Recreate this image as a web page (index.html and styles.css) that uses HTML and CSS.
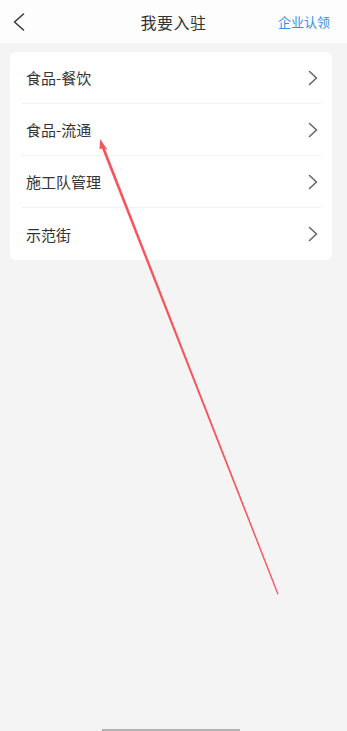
FILE: index.html
```html
<!DOCTYPE html>
<html lang="zh-CN">
<head>
    <meta charset="UTF-8">
    <meta name="viewport" content="width=device-width, initial-scale=1.0">
    <title>我要入驻</title>
    <link rel="stylesheet" href="styles.css">
</head>
<body>
    <header class="topbar">
        <a class="back" href="#">
            <svg width="12" height="18" viewBox="0 0 12 18"><path d="M10.5 1 L1.5 9 L10.5 17" fill="none" stroke="#333" stroke-width="1.5" stroke-linecap="round" stroke-linejoin="round"/></svg>
        </a>
        <h1>我要入驻</h1>
        <a class="claim" href="#">企业认领</a>
    </header>

    <div class="card">
        <a class="row" href="#"><span>食品-餐饮</span><svg class="arrow" width="10" height="16" viewBox="0 0 10 16"><path d="M1.5 1.5 L8.5 8 L1.5 14.5" fill="none" stroke="#666" stroke-width="1.6" stroke-linecap="round" stroke-linejoin="round"/></svg></a>
        <a class="row" href="#"><span>食品-流通</span><svg class="arrow" width="10" height="16" viewBox="0 0 10 16"><path d="M1.5 1.5 L8.5 8 L1.5 14.5" fill="none" stroke="#666" stroke-width="1.6" stroke-linecap="round" stroke-linejoin="round"/></svg></a>
        <a class="row" href="#"><span>施工队管理</span><svg class="arrow" width="10" height="16" viewBox="0 0 10 16"><path d="M1.5 1.5 L8.5 8 L1.5 14.5" fill="none" stroke="#666" stroke-width="1.6" stroke-linecap="round" stroke-linejoin="round"/></svg></a>
        <a class="row" href="#"><span>示范街</span><svg class="arrow" width="10" height="16" viewBox="0 0 10 16"><path d="M1.5 1.5 L8.5 8 L1.5 14.5" fill="none" stroke="#666" stroke-width="1.6" stroke-linecap="round" stroke-linejoin="round"/></svg></a>
    </div>

    <svg class="pointer" width="347" height="731" viewBox="0 0 347 731">
        <polygon points="101,146 103.6,145 278.6,594 277.4,594.4" fill="#f5555a"/>
        <polygon points="100,139 108,150.5 103.5,147.5 99.5,149.5" fill="#f5555a"/>
    </svg>

    <div class="home-bar"></div>
</body>
</html>
```

FILE: styles.css
```css
* {
    margin: 0;
    padding: 0;
    box-sizing: border-box;
    font-family: "Noto Sans CJK SC", "Noto Sans", sans-serif;
}

body {
    background: #f4f4f4;
    min-height: 731px;
    position: relative;
}

a {
    text-decoration: none;
}

.topbar {
    height: 43px;
    background: #fdfdfd;
    display: flex;
    align-items: center;
    padding: 0 17px 0 13px;
    position: relative;
}

.back {
    display: flex;
    width: 20px;
}

.topbar h1 {
    position: absolute;
    left: 0;
    right: 0;
    text-align: center;
    font-size: 16px;
    font-weight: 400;
    color: #333;
    letter-spacing: 0.5px;
    pointer-events: none;
}

.claim {
    margin-left: auto;
    font-size: 13px;
    color: #3b8fe0;
}

.card {
    margin: 9px 15px 0 10px;
    background: #fff;
    border-radius: 6px;
    padding: 0 11px;
}

.row {
    height: 52px;
    display: flex;
    align-items: center;
    justify-content: space-between;
    padding: 0 3px 0 5px;
    border-bottom: 1px solid #f2f2f2;
    color: #333;
    font-size: 15px;
}

.row:last-child {
    border-bottom: none;
}

.pointer {
    position: absolute;
    top: 0;
    left: 0;
    pointer-events: none;
}

.home-bar {
    position: absolute;
    left: 102px;
    bottom: 0;
    width: 138px;
    height: 2px;
    background: #b2b2b2;
}
```
